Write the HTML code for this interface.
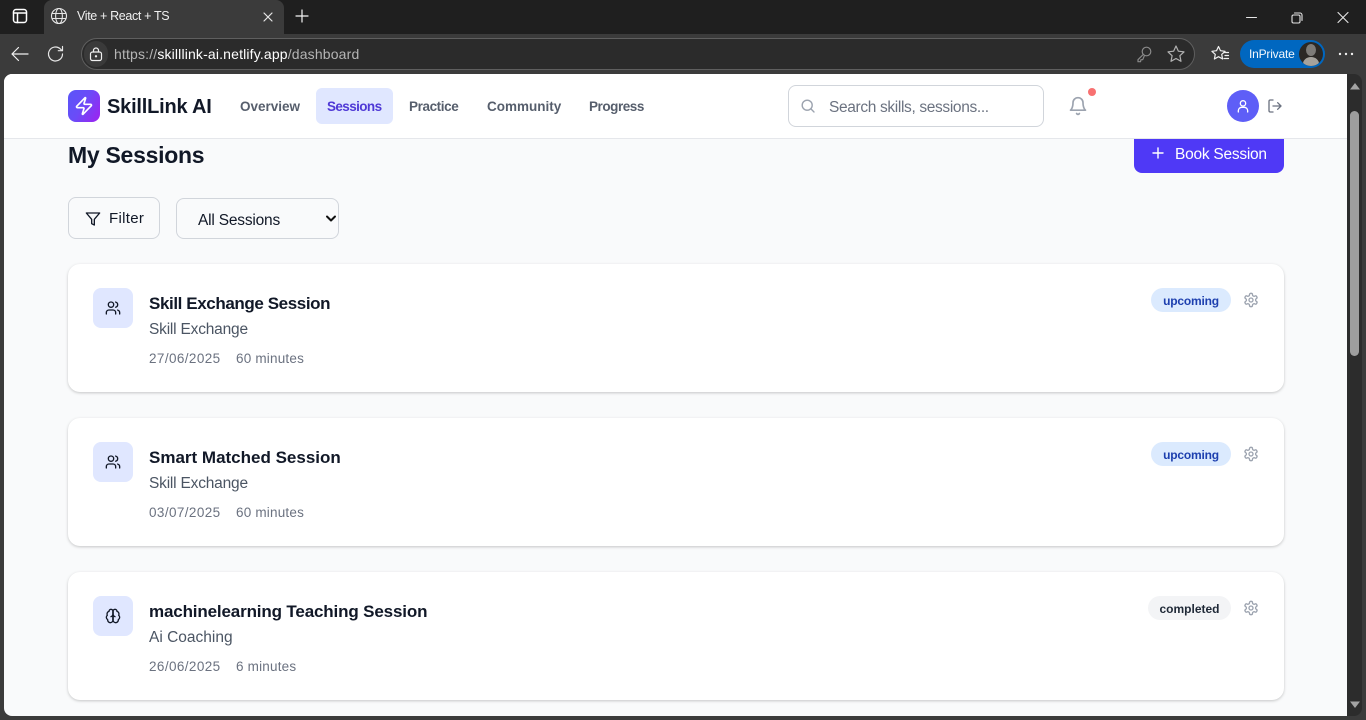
<!DOCTYPE html>
<html lang="en">
<head>
<meta charset="utf-8">
<title>Vite + React + TS</title>
<style>
*{box-sizing:border-box;margin:0;padding:0}
html,body{width:1366px;height:720px;overflow:hidden;background:#3b3b3b;font-family:"Liberation Sans",sans-serif}
.a{position:absolute;white-space:nowrap}
svg{position:absolute;fill:none;stroke-linecap:round;stroke-linejoin:round}
.card{position:absolute;left:68px;width:1216px;height:128px;background:#fff;border-radius:12px;box-shadow:0 1px 3px rgba(0,0,0,.16),0 1px 2px rgba(0,0,0,.06)}
.ico{position:absolute;left:25px;top:24px;width:40px;height:40px;background:#e0e7ff;border-radius:8px}
.t{position:absolute;left:81px;top:29px;font-size:17px;font-weight:700;color:#111827;line-height:22px;white-space:nowrap}
.s{position:absolute;left:81px;top:56px;font-size:15.5px;color:#4b5563;line-height:20px;white-space:nowrap}
.d{position:absolute;left:81px;top:86px;font-size:13.5px;color:#6b7280;line-height:18px;white-space:nowrap;letter-spacing:.4px}
.m{position:absolute;left:168px;top:86px;font-size:13.5px;color:#6b7280;line-height:18px;white-space:nowrap;letter-spacing:.2px}
.b{position:absolute;top:24px;height:24px;border-radius:12px;font-size:12px;font-weight:700;line-height:26px;text-align:center}
.up{left:1083px;width:80px;background:#dbeafe;color:#1e40af;letter-spacing:-.2px}
.co{left:1080px;width:83px;background:#f3f4f6;color:#1f2937}
.nav{position:absolute;top:89px;font-size:13.5px;font-weight:700;color:#565e6c;line-height:36px;white-space:nowrap}
</style>
</head>
<body>
<!-- browser chrome -->
<div class="a" style="left:0;top:0;width:1366px;height:34px;background:#1f1f1f"></div>
<div class="a" style="left:44px;top:0;width:240px;height:34px;background:#3b3b3b;border-radius:8px 8px 0 0"></div>
<svg style="left:12px;top:8px" width="16" height="16" stroke="#fff" stroke-width="1.500"><rect x="1.500" y="1.500" width="13" height="13" rx="2.500"/><path d="M1.500 5h13M5.500 5v9.500"/></svg>
<svg style="left:50px;top:7px" width="18" height="18" stroke="#e6e6e6" stroke-width="1.100"><circle cx="9" cy="9" r="7.500"/><ellipse cx="9" cy="9" rx="3.400" ry="7.500"/><path d="M2 6.500h14M2 11.500h14"/></svg>
<div class="a" style="left:77px;top:8px;font-size:12.500px;color:#f0f0f0;line-height:16px;letter-spacing:-.35px">Vite + React + TS</div>
<svg style="left:262px;top:11px" width="12" height="12" stroke="#e6e6e6" stroke-width="1.200"><path d="M2 2l8 8M10 2l-8 8"/></svg>
<svg style="left:294px;top:8px" width="16" height="16" stroke="#f5f5f5" stroke-width="1.200"><path d="M8 2v12M2 8h12"/></svg>
<svg style="left:1244px;top:12px" width="16" height="12" stroke="#e6e6e6" stroke-width="1.100"><path d="M2.500 5.500h10"/></svg>
<svg style="left:1290px;top:11px" width="14" height="14" stroke="#e6e6e6" stroke-width="1.100"><rect x="2" y="4" width="8" height="8" rx="1.500"/><path d="M4.500 2h5.500a2 2 0 0 1 2 2v5.500"/></svg>
<svg style="left:1335px;top:10px" width="16" height="16" stroke="#e6e6e6" stroke-width="1.100"><path d="M3 2.500l10 10M13 2.500l-10 10"/></svg>

<svg style="left:10px;top:45px" width="20" height="18" stroke="#f0f0f0" stroke-width="1.200"><path d="M2 9h16M8.500 2.500L2 9l6.500 6.500"/></svg>
<svg style="left:46px;top:44px" width="20" height="20" stroke="#e6e6e6" stroke-width="1.200"><path d="M16.500 10a7 7 0 1 1-2.200-5.100L16 6.500"/><path d="M16.500 2.500v4.200h-4.200"/></svg>
<div class="a" style="left:81px;top:38px;width:1114px;height:32px;background:#2b2b2b;border:1px solid #5f5f5f;border-radius:16px"></div>
<div class="a" style="left:84px;top:41px;width:24px;height:26px;background:#3a3a3a;border-radius:13px"></div>
<svg style="left:88px;top:46px" width="16" height="16" stroke="#f0f0f0" stroke-width="1.200"><rect x="2.500" y="6" width="11" height="8.500" rx="2"/><path d="M5.500 6V4.500a2.500 2.500 0 0 1 5 0V6"/><circle cx="8" cy="10.300" r=".6" fill="#f0f0f0"/></svg>
<div class="a" style="left:114px;top:46px;font-size:14px;line-height:17px;color:#b5b5b5;letter-spacing:.16px">https://<span style="color:#fff">skilllink-ai.netlify.app</span>/dashboard</div>
<svg style="left:1135px;top:44px" width="18" height="20" stroke="#8a8a8a" stroke-width="1.200"><circle cx="11.500" cy="7.500" r="4.300"/><path d="M8.200 10.500L3 15.700v2h2.500l.5-2h1.700l1.500-3.500"/></svg>
<svg style="left:1166px;top:44px" width="20" height="20" stroke="#b0b0b0" stroke-width="1.200"><path d="M10 2l2.400 5.200 5.600.7-4.100 3.800 1.100 5.600-5-2.800-5 2.800 1.100-5.600L2 7.900l5.600-.7z"/></svg>
<svg style="left:1210px;top:44px" width="20" height="20" stroke="#f0f0f0" stroke-width="1.200"><path d="M8.500 2.500l2 4.200 4.600.6-3.400 3.100.9 4.600-4.100-2.300-4.100 2.300.9-4.600-3.400-3.100 4.600-.6z"/><path d="M14 8.500h4.500M15 11.500h3.500M14 14.500h4.500"/></svg>
<div class="a" style="left:1240px;top:40px;width:85px;height:28px;background:#0067c0;border-radius:14px"></div>
<div class="a" style="left:1249px;top:46px;font-size:12px;line-height:16px;color:#f2f7fc;letter-spacing:-.2px">InPrivate</div>
<div class="a" style="left:1299px;top:42px;width:24px;height:24px;border-radius:50%;background:#2b2825;overflow:hidden">
 <div class="a" style="left:7px;top:2px;width:10px;height:12px;border-radius:50%;background:#7d7b78"></div>
 <div class="a" style="left:4px;top:15px;width:16px;height:14px;border-radius:50%;background:#a5a29c"></div>
</div>
<svg style="left:1338px;top:46px" width="16" height="16"><circle cx="2" cy="8" r="1.200" fill="#f0f0f0"/><circle cx="8" cy="8" r="1.200" fill="#f0f0f0"/><circle cx="14" cy="8" r="1.200" fill="#f0f0f0"/></svg>

<!-- scrollbar -->
<div class="a" style="left:1340px;top:74px;width:22px;height:642px;background:#2c2c2c;border-radius:0 8px 8px 0"></div>
<div class="a" style="left:1350px;top:111px;width:9px;height:245px;background:#9e9e9e;border-radius:5px"></div>
<svg style="left:1349px;top:81px" width="12" height="10"><path d="M1 8.500L6 2 11 8.500z" fill="#a3a3a3"/></svg>
<svg style="left:1349px;top:700px" width="12" height="10"><path d="M1 1.500L6 8 11 1.500z" fill="#a3a3a3"/></svg>

<!-- page -->
<div class="a" style="left:4px;top:74px;width:1343px;height:642px;background:#f9fafb;border-radius:8px 0 0 8px"></div>

<!-- main content -->
<div class="a" style="left:68px;top:139px;font-size:23px;font-weight:700;color:#111827;line-height:32px;letter-spacing:-.28px">My Sessions</div>
<div class="a" style="left:1134px;top:130px;width:150px;height:43px;background:#4f39f6;border-radius:8px"></div>
<svg style="left:1150px;top:145px" width="16" height="16" stroke="#fff" stroke-width="1.400"><path d="M8 3v10M3 8h10"/></svg>
<div class="a" style="left:1175px;top:145px;font-size:15.500px;color:#fff;line-height:19px;letter-spacing:-.25px">Book Session</div>

<div class="a" style="left:68px;top:197px;width:92px;height:42px;background:#f9fafb;border:1px solid #d1d5db;border-radius:8px"></div>
<svg style="left:85px;top:211px" width="16" height="16" viewBox="0 0 24 24" stroke="#111827" stroke-width="2"><path d="M22 3H2l8 9.460V19l4 2v-8.540z"/></svg>
<div class="a" style="left:109px;top:209px;font-size:15px;color:#111827;line-height:19px;letter-spacing:.3px">Filter</div>
<div class="a" style="left:176px;top:198px;width:163px;height:41px;background:#f9fafb;border:1px solid #d1d5db;border-radius:8px"></div>
<div class="a" style="left:198px;top:211px;font-size:15.500px;color:#111827;line-height:19px;letter-spacing:-.2px">All Sessions</div>
<svg style="left:325px;top:214px" width="12" height="10" stroke="#111" stroke-width="2"><path d="M2 2.500l4 4 4-4"/></svg>

<!-- cards -->
<div class="card" style="top:264px">
 <div class="ico"><svg style="left:12px;top:12px" width="16" height="16" viewBox="0 0 24 24" stroke="#111827" stroke-width="2"><path d="M16 21v-2a4 4 0 0 0-4-4H6a4 4 0 0 0-4 4v2"/><circle cx="9" cy="7" r="4"/><path d="M22 21v-2a4 4 0 0 0-3-3.870M16 3.130a4 4 0 0 1 0 7.750"/></svg></div>
 <div class="t" style="letter-spacing:-.4px">Skill Exchange Session</div>
 <div class="s" style="letter-spacing:-.2px">Skill Exchange</div>
 <div class="d">27/06/2025</div><div class="m">60 minutes</div>
 <div class="b up">upcoming</div>
 <svg style="left:1175px;top:28px" width="16" height="16" viewBox="0 0 24 24" stroke="#9ca3af" stroke-width="2"><path d="M12.220 2h-.44a2 2 0 0 0-2 2v.18a2 2 0 0 1-1 1.730l-.43.25a2 2 0 0 1-2 0l-.15-.08a2 2 0 0 0-2.730.73l-.22.380a2 2 0 0 0 .73 2.730l.15.100a2 2 0 0 1 1 1.720v.510a2 2 0 0 1-1 1.740l-.15.090a2 2 0 0 0-.73 2.730l.22.380a2 2 0 0 0 2.730.730l.15-.08a2 2 0 0 1 2 0l.43.250a2 2 0 0 1 1 1.730V20a2 2 0 0 0 2 2h.44a2 2 0 0 0 2-2v-.18a2 2 0 0 1 1-1.730l.43-.25a2 2 0 0 1 2 0l.15.080a2 2 0 0 0 2.730-.73l.22-.390a2 2 0 0 0-.73-2.730l-.15-.080a2 2 0 0 1-1-1.740v-.500a2 2 0 0 1 1-1.740l.15-.090a2 2 0 0 0 .73-2.730l-.22-.380a2 2 0 0 0-2.730-.730l-.15.080a2 2 0 0 1-2 0l-.43-.250a2 2 0 0 1-1-1.730V4a2 2 0 0 0-2-2z"/><circle cx="12" cy="12" r="3"/></svg>
</div>
<div class="card" style="top:418px">
 <div class="ico"><svg style="left:12px;top:12px" width="16" height="16" viewBox="0 0 24 24" stroke="#111827" stroke-width="2"><path d="M16 21v-2a4 4 0 0 0-4-4H6a4 4 0 0 0-4 4v2"/><circle cx="9" cy="7" r="4"/><path d="M22 21v-2a4 4 0 0 0-3-3.870M16 3.130a4 4 0 0 1 0 7.750"/></svg></div>
 <div class="t">Smart Matched Session</div>
 <div class="s" style="letter-spacing:-.2px">Skill Exchange</div>
 <div class="d">03/07/2025</div><div class="m">60 minutes</div>
 <div class="b up">upcoming</div>
 <svg style="left:1175px;top:28px" width="16" height="16" viewBox="0 0 24 24" stroke="#9ca3af" stroke-width="2"><path d="M12.220 2h-.44a2 2 0 0 0-2 2v.18a2 2 0 0 1-1 1.730l-.43.25a2 2 0 0 1-2 0l-.15-.08a2 2 0 0 0-2.730.73l-.22.380a2 2 0 0 0 .73 2.730l.15.100a2 2 0 0 1 1 1.720v.510a2 2 0 0 1-1 1.740l-.15.090a2 2 0 0 0-.73 2.730l.22.380a2 2 0 0 0 2.730.730l.15-.08a2 2 0 0 1 2 0l.43.250a2 2 0 0 1 1 1.730V20a2 2 0 0 0 2 2h.44a2 2 0 0 0 2-2v-.18a2 2 0 0 1 1-1.730l.43-.25a2 2 0 0 1 2 0l.15.080a2 2 0 0 0 2.730-.73l.22-.390a2 2 0 0 0-.73-2.730l-.15-.080a2 2 0 0 1-1-1.740v-.500a2 2 0 0 1 1-1.740l.15-.090a2 2 0 0 0 .73-2.730l-.22-.380a2 2 0 0 0-2.730-.730l-.15.080a2 2 0 0 1-2 0l-.43-.250a2 2 0 0 1-1-1.730V4a2 2 0 0 0-2-2z"/><circle cx="12" cy="12" r="3"/></svg>
</div>
<div class="card" style="top:572px">
 <div class="ico"><svg style="left:12px;top:12px" width="16" height="16" viewBox="0 0 24 24" stroke="#111827" stroke-width="2"><path d="M12 5a3 3 0 1 0-5.997.125 4 4 0 0 0-2.526 5.770 4 4 0 0 0 .556 6.588A4 4 0 1 0 12 18z"/><path d="M12 5a3 3 0 1 1 5.997.125 4 4 0 0 1 2.526 5.770 4 4 0 0 1-.556 6.588A4 4 0 1 1 12 18z"/><path d="M15 13a4.500 4.500 0 0 1-3-4 4.500 4.500 0 0 1-3 4M12 18V5"/></svg></div>
 <div class="t" style="letter-spacing:-.15px">machinelearning Teaching Session</div>
 <div class="s">Ai Coaching</div>
 <div class="d">26/06/2025</div><div class="m">6 minutes</div>
 <div class="b co">completed</div>
 <svg style="left:1175px;top:28px" width="16" height="16" viewBox="0 0 24 24" stroke="#9ca3af" stroke-width="2"><path d="M12.220 2h-.44a2 2 0 0 0-2 2v.18a2 2 0 0 1-1 1.730l-.43.25a2 2 0 0 1-2 0l-.15-.08a2 2 0 0 0-2.730.73l-.22.380a2 2 0 0 0 .73 2.730l.15.100a2 2 0 0 1 1 1.720v.510a2 2 0 0 1-1 1.740l-.15.090a2 2 0 0 0-.73 2.730l.22.380a2 2 0 0 0 2.730.730l.15-.08a2 2 0 0 1 2 0l.43.250a2 2 0 0 1 1 1.730V20a2 2 0 0 0 2 2h.44a2 2 0 0 0 2-2v-.18a2 2 0 0 1 1-1.730l.43-.25a2 2 0 0 1 2 0l.15.080a2 2 0 0 0 2.730-.73l.22-.390a2 2 0 0 0-.73-2.730l-.15-.080a2 2 0 0 1-1-1.740v-.500a2 2 0 0 1 1-1.740l.15-.090a2 2 0 0 0 .73-2.730l-.22-.380a2 2 0 0 0-2.730-.730l-.15.080a2 2 0 0 1-2 0l-.43-.250a2 2 0 0 1-1-1.730V4a2 2 0 0 0-2-2z"/><circle cx="12" cy="12" r="3"/></svg>
</div>

<!-- app header -->
<div class="a" style="left:4px;top:74px;width:1343px;height:65px;background:#fff;border-bottom:1px solid #e5e7eb;border-top-left-radius:8px"></div>
<div class="a" style="left:68px;top:90px;width:32px;height:32px;border-radius:8px;background:linear-gradient(120deg,#5a55f8 0%,#6a4cf8 45%,#a020f0 100%)"></div>
<svg style="left:74px;top:96px" width="20" height="20" viewBox="0 0 24 24" stroke="#fff" stroke-width="2"><path d="M4 14a1 1 0 0 1-.78-1.630l9.900-10.200a.5.5 0 0 1 .86.460l-1.920 6.020A1 1 0 0 0 13 10h7a1 1 0 0 1 .78 1.630l-9.900 10.200a.5.5 0 0 1-.86-.460l1.920-6.020A1 1 0 0 0 11 14z"/></svg>
<div class="a" style="left:107px;top:95px;font-size:20px;font-weight:700;color:#111827;line-height:25px;letter-spacing:-.2px">SkillLink AI</div>
<div class="nav" style="left:240px">Overview</div>
<div class="a" style="left:316px;top:88px;width:77px;height:36px;background:#e0e7ff;border-radius:6px"></div>
<div class="nav" style="left:327px;color:#4f39d6;letter-spacing:-.6px">Sessions</div>
<div class="nav" style="left:409px;letter-spacing:-.4px">Practice</div>
<div class="nav" style="left:487px">Community</div>
<div class="nav" style="left:589px;letter-spacing:-.45px">Progress</div>

<div class="a" style="left:788px;top:85px;width:256px;height:42px;background:#fff;border:1px solid #d1d5db;border-radius:8px"></div>
<svg style="left:800px;top:98px" width="16" height="16" stroke="#9ca3af" stroke-width="1.400"><circle cx="7.200" cy="7.200" r="5"/><path d="M14 14l-3.200-3.200"/></svg>
<div class="a" style="left:829px;top:98px;font-size:15.500px;color:#6b7280;line-height:19px;letter-spacing:-.35px">Search skills, sessions...</div>
<svg style="left:1068px;top:96px" width="20" height="20" viewBox="0 0 24 24" stroke="#9ca3af" stroke-width="2"><path d="M6 8a6 6 0 0 1 12 0c0 7 3 9 3 9H3s3-2 3-9M10.300 21a1.900 1.900 0 0 0 3.400 0"/></svg>
<div class="a" style="left:1088px;top:88px;width:8px;height:8px;border-radius:50%;background:#f87171"></div>
<div class="a" style="left:1227px;top:90px;width:32px;height:32px;border-radius:50%;background:#5e5ef7"></div>
<svg style="left:1235px;top:98px" width="16" height="16" viewBox="0 0 24 24" stroke="#fff" stroke-width="2"><circle cx="12" cy="8" r="4"/><path d="M5 21v-2a5 5 0 0 1 5-5h4a5 5 0 0 1 5 5v2"/></svg>
<svg style="left:1267px;top:98px" width="16" height="16" viewBox="0 0 24 24" stroke="#6b7280" stroke-width="2"><path d="M9 21H5a2 2 0 0 1-2-2V5a2 2 0 0 1 2-2h4M16 17l5-5-5-5M21 12H9"/></svg>
</body>
</html>
